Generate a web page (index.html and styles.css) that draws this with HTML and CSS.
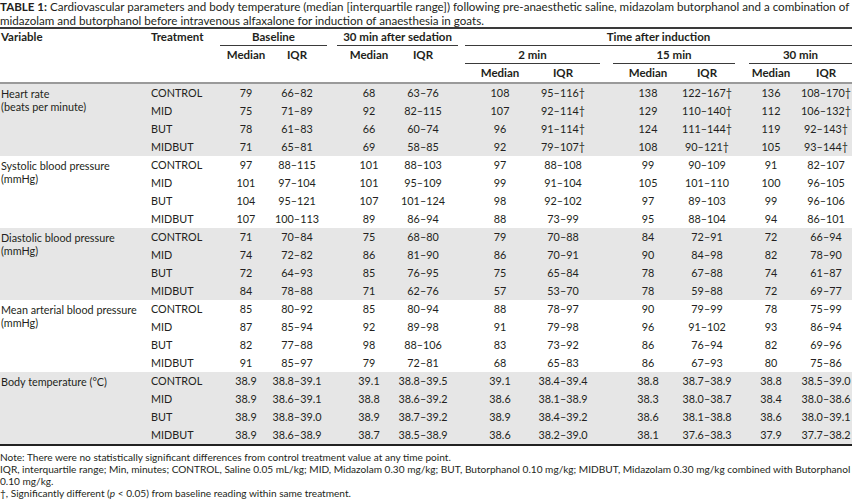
FILE: index.html
```html
<!DOCTYPE html>
<html lang="en">
<head>
<meta charset="utf-8">
<title>Table 1</title>
<link rel="stylesheet" href="styles.css">
</head>
<body>
<div class="page">
  <div class="caption"><b>TABLE 1:</b> Cardiovascular parameters and body temperature (median [interquartile range]) following pre-anaesthetic saline, midazolam butorphanol and a combination of<br>midazolam and butorphanol before intravenous alfaxalone for induction of anaesthesia in goats.</div>
  <table class="data">
    <colgroup>
      <col class="w-var"><col class="w-trt">
      <col class="w1"><col class="w2"><col class="w3"><col class="w4"><col class="w5">
      <col class="w6"><col class="w7"><col class="w8"><col class="w9"><col class="w10">
    </colgroup>
    <thead>
      <tr class="hr1">
        <th class="var" rowspan="3">Variable</th>
        <th class="trt" rowspan="3">Treatment</th>
        <th colspan="2"><div class="grp g-base">Baseline</div></th>
        <th colspan="2"><div class="grp g-sed">30 min after sedation</div></th>
        <th colspan="6"><div class="grp g-time">Time after induction</div></th>
      </tr>
      <tr class="hr2">
        <th class="k1" rowspan="2">Median</th>
        <th class="k2" rowspan="2">IQR</th>
        <th class="k3" rowspan="2">Median</th>
        <th class="k4" rowspan="2">IQR</th>
        <th colspan="2"><div class="grp g-2">2 min</div></th>
        <th colspan="2"><div class="grp g-15">15 min</div></th>
        <th colspan="2"><div class="grp g-30">30 min</div></th>
      </tr>
      <tr class="hr3">
        <th class="k5">Median</th><th class="k6">IQR</th>
        <th class="k7">Median</th><th class="k8">IQR</th>
        <th class="k9">Median</th><th class="k10">IQR</th>
      </tr>
    </thead>
    <tbody class="band first">
      <tr><td class="var" rowspan="4">Heart rate<br>(beats per minute)</td><td class="trt">CONTROL</td><td>79</td><td>66–82</td><td>68</td><td>63–76</td><td>108</td><td>95–116†</td><td>138</td><td>122–167†</td><td>136</td><td>108–170†</td></tr>
      <tr><td class="trt">MID</td><td>75</td><td>71–89</td><td>92</td><td>82–115</td><td>107</td><td>92–114†</td><td>129</td><td>110–140†</td><td>112</td><td>106–132†</td></tr>
      <tr><td class="trt">BUT</td><td>78</td><td>61–83</td><td>66</td><td>60–74</td><td>96</td><td>91–114†</td><td>124</td><td>111–144†</td><td>119</td><td>92–143†</td></tr>
      <tr><td class="trt">MIDBUT</td><td>71</td><td>65–81</td><td>69</td><td>58–85</td><td>92</td><td>79–107†</td><td>108</td><td>90–121†</td><td>105</td><td>93–144†</td></tr>
    </tbody>
    <tbody>
      <tr><td class="var" rowspan="4">Systolic blood pressure<br>(mmHg)</td><td class="trt">CONTROL</td><td>97</td><td>88–115</td><td>101</td><td>88–103</td><td>97</td><td>88–108</td><td>99</td><td>90–109</td><td>91</td><td>82–107</td></tr>
      <tr><td class="trt">MID</td><td>101</td><td>97–104</td><td>101</td><td>95–109</td><td>99</td><td>91–104</td><td>105</td><td>101–110</td><td>100</td><td>96–105</td></tr>
      <tr><td class="trt">BUT</td><td>104</td><td>95–121</td><td>107</td><td>101–124</td><td>98</td><td>92–102</td><td>97</td><td>89–103</td><td>99</td><td>96–106</td></tr>
      <tr><td class="trt">MIDBUT</td><td>107</td><td>100–113</td><td>89</td><td>86–94</td><td>88</td><td>73–99</td><td>95</td><td>88–104</td><td>94</td><td>86–101</td></tr>
    </tbody>
    <tbody class="band">
      <tr><td class="var" rowspan="4">Diastolic blood pressure<br>(mmHg)</td><td class="trt">CONTROL</td><td>71</td><td>70–84</td><td>75</td><td>68–80</td><td>79</td><td>70–88</td><td>84</td><td>72–91</td><td>72</td><td>66–94</td></tr>
      <tr><td class="trt">MID</td><td>74</td><td>72–82</td><td>86</td><td>81–90</td><td>86</td><td>70–91</td><td>90</td><td>84–98</td><td>82</td><td>78–90</td></tr>
      <tr><td class="trt">BUT</td><td>72</td><td>64–93</td><td>85</td><td>76–95</td><td>75</td><td>65–84</td><td>78</td><td>67–88</td><td>74</td><td>61–87</td></tr>
      <tr><td class="trt">MIDBUT</td><td>84</td><td>78–88</td><td>71</td><td>62–76</td><td>57</td><td>53–70</td><td>78</td><td>59–88</td><td>72</td><td>69–77</td></tr>
    </tbody>
    <tbody>
      <tr><td class="var" rowspan="4">Mean arterial blood pressure<br>(mmHg)</td><td class="trt">CONTROL</td><td>85</td><td>80–92</td><td>85</td><td>80–94</td><td>88</td><td>78–97</td><td>90</td><td>79–99</td><td>78</td><td>75–99</td></tr>
      <tr><td class="trt">MID</td><td>87</td><td>85–94</td><td>92</td><td>89–98</td><td>91</td><td>79–98</td><td>96</td><td>91–102</td><td>93</td><td>86–94</td></tr>
      <tr><td class="trt">BUT</td><td>82</td><td>77–88</td><td>98</td><td>88–106</td><td>83</td><td>73–92</td><td>86</td><td>76–94</td><td>82</td><td>69–96</td></tr>
      <tr><td class="trt">MIDBUT</td><td>91</td><td>85–97</td><td>79</td><td>72–81</td><td>68</td><td>65–83</td><td>86</td><td>67–93</td><td>80</td><td>75–86</td></tr>
    </tbody>
    <tbody class="band last">
      <tr><td class="var" rowspan="4">Body temperature (°C)</td><td class="trt">CONTROL</td><td>38.9</td><td>38.8–39.1</td><td>39.1</td><td>38.8–39.5</td><td>39.1</td><td>38.4–39.4</td><td>38.8</td><td>38.7–38.9</td><td>38.8</td><td>38.5–39.0</td></tr>
      <tr><td class="trt">MID</td><td>38.9</td><td>38.6–39.1</td><td>38.8</td><td>38.6–39.2</td><td>38.6</td><td>38.1–38.9</td><td>38.3</td><td>38.0–38.7</td><td>38.4</td><td>38.0–38.6</td></tr>
      <tr><td class="trt">BUT</td><td>38.9</td><td>38.8–39.0</td><td>38.9</td><td>38.7–39.2</td><td>38.9</td><td>38.4–39.2</td><td>38.6</td><td>38.1–38.8</td><td>38.6</td><td>38.0–39.1</td></tr>
      <tr><td class="trt">MIDBUT</td><td>38.9</td><td>38.6–38.9</td><td>38.7</td><td>38.5–38.9</td><td>38.6</td><td>38.2–39.0</td><td>38.1</td><td>37.6–38.3</td><td>37.9</td><td>37.7–38.2</td></tr>
    </tbody>
  </table>
  <div class="notes">
    <p>Note: There were no statistically significant differences from control treatment value at any time point.</p>
    <p>IQR, interquartile range; Min, minutes; CONTROL, Saline 0.05 mL/kg; MID, Midazolam 0.30 mg/kg; BUT, Butorphanol 0.10 mg/kg; MIDBUT, Midazolam 0.30 mg/kg combined with Butorphanol 0.10 mg/kg.</p>
    <p>†, Significantly different (<i>p</i> &lt; 0.05) from baseline reading within same treatment.</p>
  </div>
</div>
</body>
</html>
```
FILE: styles.css
```css
html, body {
  margin: 0;
  padding: 0;
  background: #ffffff;
}
body {
  font-family: "Lato", "Open Sans", "Liberation Sans", sans-serif;
  color: #231f20;
}
.page {
  width: 852px;
  height: 499px;
  overflow: hidden;
}
.caption {
  font-size: 11.6px;
  line-height: 13.5px;
  padding-top: 0;
  border-bottom: 2px solid #3a3a3a;
  white-space: nowrap;
}
.caption b {
  font-weight: 700;
}
.data {
  width: 852px;
  table-layout: fixed;
  border-collapse: collapse;
  border-spacing: 0;
  font-size: 10.8px;
}
.w-var { width: 148px; }
.w-trt { width: 70px; }
.w1 { width: 54px; }
.w2 { width: 61px; }
.w3 { width: 63px; }
.w4 { width: 66px; }
.w5 { width: 70px; }
.w6 { width: 74px; }
.w7 { width: 72px; }
.w8 { width: 61px; }
.w9 { width: 60px; }
.w10 { width: 53px; }

.data th, .data td {
  padding: 0;
  text-align: center;
  white-space: nowrap;
}
.data th {
  font-weight: 700;
  font-size: 11.5px;
  vertical-align: top;
}
.data .var {
  text-align: left;
  padding-left: 1px;
  vertical-align: top;
}
.data .trt {
  text-align: left;
  padding-left: 3px;
}
.hr1 th { height: 17px; }
.hr2 th { height: 18px; }
.hr3 th { height: 18px; line-height: 18px; }
.data th.var, .data th.trt {
  line-height: 16px;
}
.grp {
  line-height: 16px;
  border-bottom: 1px solid #3a3a3a;
}
.hr2 .grp { margin-top: 1px; }
.hr2 th.k1, .hr2 th.k2, .hr2 th.k3, .hr2 th.k4 {
  padding-top: 1px;
  line-height: 16px;
}
.g-base { margin-left: 2px; margin-right: 6px; }
.g-sed { margin-left: 4px; margin-right: 4px; }
.g-time { margin-left: 3px; }
.g-2 { margin-left: 3px; margin-right: 6px; }
.g-15 { margin-left: 7px; margin-right: 4px; }
.g-30 { margin-left: 10px; }

.data .k1 { padding-left: 2px; }
.data .k2 { padding-right: 11px; }
.data .k3 { padding-left: 9px; }
.data .k4 { padding-right: 12px; }
.data .k5 { padding-left: 6px; }
.data .k6 { padding-right: 12px; }
.data .k7 { padding-left: 12px; }
.data .k8 { padding-right: 3px; }
.data .k9 { padding-left: 4px; }
.data .k10 { padding-left: 1px; }

.data tbody td {
  height: 18px;
  line-height: 18px;
}
.data tbody td:nth-last-child(10) { padding-left: 2px; }
.data tbody td:nth-last-child(9) { padding-right: 11px; }
.data tbody td:nth-last-child(8) { padding-left: 9px; }
.data tbody td:nth-last-child(7) { padding-right: 12px; }
.data tbody td:nth-last-child(6) { padding-left: 6px; }
.data tbody td:nth-last-child(5) { padding-right: 12px; }
.data tbody td:nth-last-child(4) { padding-left: 12px; }
.data tbody td:nth-last-child(3) { padding-right: 3px; }
.data tbody td:nth-last-child(2) { padding-left: 4px; }
.data tbody td:nth-last-child(1) { padding-left: 1px; }

.data tbody td.var {
  line-height: 13px;
  padding-top: 3px;
}
.band td {
  background: #e6e6e6;
}
.data thead tr.hr3 th,
.data thead th.var,
.data thead th.trt,
.data thead th.k1, .data thead th.k2, .data thead th.k3, .data thead th.k4 {
  border-bottom: 2px solid #9a9a9a;
}
.data tbody.last tr:last-child td,
.data tbody.last td.var {
  border-bottom: 2px solid #222222;
}
.notes {
  margin-top: 5px;
  font-size: 10.1px;
  line-height: 12px;
}
.notes p {
  margin: 0;
}
```
